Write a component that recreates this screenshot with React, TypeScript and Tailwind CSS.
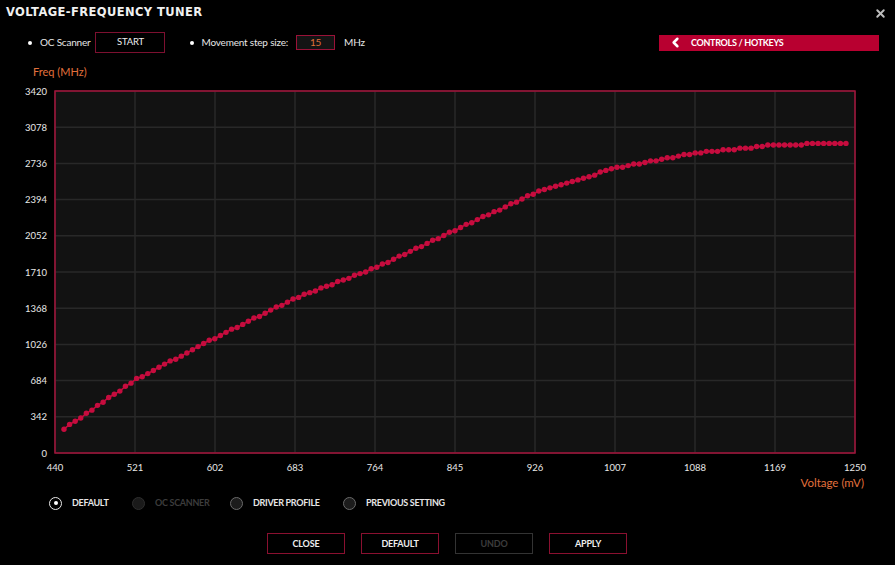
import { ChevronLeft, X } from 'lucide-react';

// plot box in page coordinates
const PL = 55;
const PR = 855;
const PT = 91;
const PB = 453;

const KNOTS: [number, number][] = [
  [64, 429], [135, 380], [215, 338], [295, 298], [375, 268], [455, 230],
  [535, 193], [615, 168], [695, 153], [775, 145], [846, 143],
];

function interp(x: number) {
  for (let i = 0; i < KNOTS.length - 1; i++) {
    const [x0, y0] = KNOTS[i];
    const [x1, y1] = KNOTS[i + 1];
    if (x <= x1) return y0 + ((x - x0) / (x1 - x0)) * (y1 - y0);
  }
  return KNOTS[KNOTS.length - 1][1];
}

const COUNT = 141;
const points = Array.from({ length: COUNT }, (_, i) => {
  const x = 64 + (i * (846 - 64)) / (COUNT - 1);
  const y = interp(x);
  // snap to 15 MHz steps like the real curve
  const f = Math.round((((PB - y) / (PB - PT)) * 3420) / 15) * 15;
  return [x, PB - (f / 3420) * (PB - PT)] as [number, number];
});

const yTicks = Array.from({ length: 11 }, (_, i) => i * 342);
const xTicks = [440, 521, 602, 683, 764, 845, 926, 1007, 1088, 1169, 1250];

function Chart() {
  const step = (PB - PT) / 10;
  return (
    <svg width={895} height={390} viewBox="0 85 895 390" className="block">
      <rect x={PL} y={PT} width={PR - PL} height={PB - PT} fill="#121212" />
      {xTicks.map((_, i) => (
        <line key={'gx' + i} x1={PL + i * 80} x2={PL + i * 80} y1={PT} y2={PB} stroke="#282828" strokeWidth={1.5} />
      ))}
      {yTicks.map((_, i) => (
        <line key={'gy' + i} x1={PL} x2={PR} y1={PB - i * step} y2={PB - i * step} stroke="#282828" strokeWidth={1.5} />
      ))}
      <rect x={PL} y={PT} width={PR - PL} height={PB - PT} fill="none" stroke="#a3123a" strokeWidth={1.5} />
      <polyline points={points.map((p) => p.join(',')).join(' ')} fill="none" stroke="#c2093a" strokeWidth={1.6} />
      {points.map(([x, y], i) => (
        <circle key={i} cx={x} cy={y} r={2.7} fill="#c60c3e" />
      ))}
      {yTicks.map((v, i) => (
        <text key={'ly' + v} x={47} y={PB - i * step + 3.5} textAnchor="end" fill="#e8e8e8" fontSize={9.5} fontFamily="Lato, sans-serif">
          {v}
        </text>
      ))}
      {xTicks.map((v, i) => (
        <text key={'lx' + v} x={PL + i * 80} y={470.5} textAnchor="middle" fill="#e8e8e8" fontSize={9.5} fontFamily="Lato, sans-serif">
          {v}
        </text>
      ))}
    </svg>
  );
}

function Radio({ label, state }: { label: string; state: 'on' | 'off' | 'disabled' }) {
  return (
    <div className="flex items-center gap-[10px]">
      {state === 'on' ? (
        <span className="w-[13px] h-[13px] rounded-full border-[1.5px] border-[#e8e8e8] flex items-center justify-center">
          <span className="w-[4px] h-[4px] rounded-full bg-white" />
        </span>
      ) : state === 'off' ? (
        <span className="w-[13px] h-[13px] rounded-full border border-[#6a6a6a] bg-[#1c1c1c]" />
      ) : (
        <span className="w-[13px] h-[13px] rounded-full border border-[#2e2e2e] bg-[#1a1a1a]" />
      )}
      <span
        className={`text-[9px] font-bold tracking-[-0.3px] ${state === 'disabled' ? 'text-[#3c3c3c]' : 'text-[#e6e6e6]'}`}
      >
        {label}
      </span>
    </div>
  );
}

function Btn({ label, disabled }: { label: string; disabled?: boolean }) {
  return (
    <button
      className={`w-[78px] h-[21px] border text-[9px] font-bold tracking-[-0.2px] flex items-center justify-center ${
        disabled ? 'border-[#333] text-[#3c3c3c]' : 'border-[#8a1030] text-[#eee]'
      }`}
    >
      {label}
    </button>
  );
}

export default function App() {
  return (
    <div className="w-[895px] h-[565px] bg-black text-white flex flex-col font-['Lato',sans-serif] overflow-hidden">
      {/* title */}
      <div className="h-[26px] flex items-center justify-between pl-[6px] pr-[8px]">
        <h1 className="text-[11.5px] font-bold tracking-[0.4px] text-[#f0f0f0] font-['DejaVu_Sans',sans-serif]">
          VOLTAGE-FREQUENCY TUNER
        </h1>
        <X size={13} strokeWidth={3.5} className="text-[#bdbdbd]" />
      </div>

      {/* scanner / step row */}
      <div className="mt-[6px] h-[21px] flex items-center pl-[28px] pr-[16px] text-[10px] tracking-[-0.2px] text-[#e6e6e6]">
        <span className="w-[4px] h-[4px] rounded-full bg-white" />
        <span className="ml-[8px]">OC Scanner</span>
        <button className="ml-[5px] w-[70px] h-[21px] border border-[#7d1030] text-[9.5px] text-[#eee]">START</button>
        <span className="ml-[25px] w-[4px] h-[4px] rounded-full bg-white" />
        <span className="ml-[7px]">Movement step size:</span>
        <span className="ml-[8px] w-[39px] h-[15px] border border-[#9a1238] bg-[#141414] flex items-center justify-center text-[#e0703a]">15</span>
        <span className="ml-[9px]">MHz</span>
        <div className="ml-auto w-[220px] h-[16px] bg-[#b80030] flex items-center pl-[9px]">
          <ChevronLeft size={15} strokeWidth={4} className="text-white" />
          <span className="ml-[8px] text-[9px] font-bold tracking-[-0.3px] text-white">CONTROLS / HOTKEYS</span>
        </div>
      </div>

      {/* chart */}
      <div className="mt-[11px] h-[16px] flex items-center pl-[33px]">
        <span className="text-[11px] text-[#e2703c]">Freq (MHz)</span>
      </div>
      <div className="mt-[5px] h-[390px]">
        <Chart />
      </div>
      <div className="h-[16px] flex items-center justify-end pr-[31px]">
        <span className="text-[11.5px] text-[#e2703c]">Voltage (mV)</span>
      </div>

      {/* profile radios */}
      <div className="mt-[4px] h-[16px] flex items-center pl-[49px]">
        <div className="w-[83px]"><Radio label="DEFAULT" state="on" /></div>
        <div className="w-[98px]"><Radio label="OC SCANNER" state="disabled" /></div>
        <div className="w-[113px]"><Radio label="DRIVER PROFILE" state="off" /></div>
        <Radio label="PREVIOUS SETTING" state="off" />
      </div>

      {/* actions */}
      <div className="mt-[22px] flex gap-[16px] pl-[267px]">
        <Btn label="CLOSE" />
        <Btn label="DEFAULT" />
        <Btn label="UNDO" disabled />
        <Btn label="APPLY" />
      </div>
    </div>
  );
}
